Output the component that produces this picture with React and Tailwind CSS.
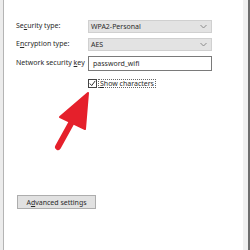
import React from "react";

const font = { fontFamily: '"Noto Sans", "Open Sans", sans-serif' };

function Chevron() {
  return (
    <svg width="7" height="5" viewBox="0 0 7 5" className="shrink-0">
      <path d="M0.5 1 L3.5 4 L6.5 1" fill="none" stroke="#8a8a8a" strokeWidth="1" />
    </svg>
  );
}

export default function App() {
  return (
    <div className="w-[250px] h-[250px] flex overflow-hidden bg-white text-[7px] text-[#2a2a2a]" style={font}>
      <div className="w-[3px] h-full bg-[#ececec]" />
      <div className="w-[1px] h-full bg-[#b4b4b4]" />
      <div className="relative flex-1 h-full bg-white flex flex-col pl-[12px] pt-[20px]">
        <div className="flex items-center h-[13px]">
          <span className="w-[72px] whitespace-nowrap">Se<u>c</u>urity type:</span>
          <div className="w-[124px] h-[13px] bg-[#e3e3e3] border border-[#d0d0d0] flex items-center justify-between pl-[2px] pr-[4px]">
            <span className="leading-none">WPA2-Personal</span>
            <Chevron />
          </div>
        </div>
        <div className="flex items-center h-[13px] mt-[5px]">
          <span className="w-[72px] whitespace-nowrap">E<u>n</u>cryption type:</span>
          <div className="w-[124px] h-[13px] bg-[#e3e3e3] border border-[#d0d0d0] flex items-center justify-between pl-[2px] pr-[4px]">
            <span className="leading-none">AES</span>
            <Chevron />
          </div>
        </div>
        <div className="flex items-center h-[15px] mt-[5px]">
          <span className="w-[72px] whitespace-nowrap">Network security <u>k</u>ey</span>
          <div className="w-[124px] h-[15px] bg-white border border-[#7a7a7a] flex items-center pl-[4px]">
            <span className="leading-none">password_wifi</span>
          </div>
        </div>
        <div className="flex items-center h-[9px] mt-[8px] ml-[72px]">
          <div className="w-[9px] h-[9px] border border-[#444] bg-white flex items-center justify-center">
            <svg width="7" height="7" viewBox="0 0 7 7">
              <path d="M0.8 3.5 L2.7 5.6 L6.2 0.9" fill="none" stroke="#333" strokeWidth="1" />
            </svg>
          </div>
          <span className="ml-[1px] h-[9px] px-[1px] border border-dotted border-[#666] leading-[7px] whitespace-nowrap"><u>S</u>how characters</span>
        </div>
        <div className="mt-[107px] ml-[1px] w-[79px] h-[14px] bg-[#e1e1e1] border border-[#adadad] flex items-center justify-center">
          <span className="leading-none whitespace-nowrap">A<u>d</u>vanced settings</span>
        </div>
        <svg className="absolute left-[0px] top-[0px]" width="239" height="250" viewBox="0 0 239 250">
          <line x1="54" y1="147" x2="70" y2="118" stroke="#e5202b" strokeWidth="6" strokeLinecap="round" />
          <polygon points="84,93 56,117 81,129" fill="#e5202b" stroke="#e5202b" strokeWidth="2" strokeLinejoin="round" />
        </svg>
      </div>
      <div className="w-[5px] h-full bg-[#f0f0f0]" />
      <div className="w-[2px] h-full bg-[#6e6e6e]" />
    </div>
  );
}
